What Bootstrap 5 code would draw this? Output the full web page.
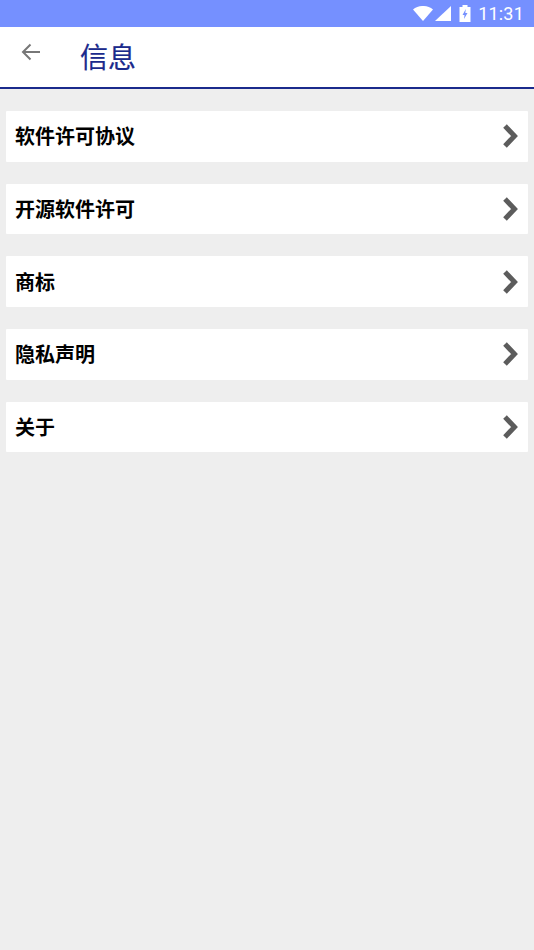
<!DOCTYPE html>
<html lang="zh">
<head>
<meta charset="utf-8">
<title>信息</title>
<link rel="stylesheet" href="https://cdn.jsdelivr.net/npm/bootstrap@5.3.0/dist/css/bootstrap.min.css">
<style>
html, body { height: 100%; }
body { background: #eeeeee; font-family: "Liberation Sans", "Noto Sans CJK SC", sans-serif; overflow: hidden; }
.status-strip { height: 27px; background: #7590ff; color: #fff; padding-right: 10px; gap: 0; }
.status-signal { margin-left: 2px; }
.status-clock { font-family: Roboto, "Liberation Sans", sans-serif; font-size: 18px; line-height: 27px; margin-left: 7px; letter-spacing: .2px; }
.head-strip { height: 62px; background: #fff; border-bottom: 2px solid #1a2a8c; }
.back-btn { width: 63px; padding-left: 21px; padding-bottom: 10px; }
.head-title { color: #1a2a8c; font-size: 28px; line-height: 1; font-family: "Noto Sans CJK SC", sans-serif; margin-left: 17px; margin-bottom: 2px; -webkit-text-stroke: .2px #1a2a8c; }
.menu-area { padding: 22px 6px 0; gap: 22px; }
.menu-row { height: 50.7px; background: #fff; padding: 0 8px 0 9px; border-radius: 1px; color: #000; text-decoration: none; }
.menu-label { font-size: 20px; font-weight: 700; font-family: "Noto Sans CJK SC", sans-serif; line-height: 1; }
</style>
</head>
<body>
<div class="status-strip d-flex align-items-center justify-content-end">
  <svg width="20" height="15" viewBox="0 0 20 15"><path d="M0 3.500C5.500-1.200 14.500-1.200 20 3.500L10 15Z" fill="#fff"/></svg>
  <svg class="status-signal" width="16" height="15" viewBox="0 0 16 15"><path d="M16 0V15H0Z" fill="#fff"/></svg>
  <svg class="ms-2" width="12" height="17" viewBox="0 0 12 17"><path d="M3.500 0H8.500V2H11.500V17H.5V2H3.500Z" fill="#fff"/><path d="M6.800 4L3.500 10H5.500L5 14L8.500 8H6.300Z" fill="#7590ff"/></svg>
  <span class="status-clock">11:31</span>
</div>
<div class="head-strip d-flex align-items-center">
  <div class="back-btn">
    <svg class="d-block" width="20" height="18" viewBox="0 0 20 18"><path d="M19 9H2M9.500 1.500L2 9L9.500 16.500" fill="none" stroke="#777" stroke-width="2"/></svg>
  </div>
  <div class="head-title">信息</div>
</div>
<div class="menu-area d-flex flex-column">
  <a class="menu-row d-flex align-items-center justify-content-between" href="#"><span class="menu-label">软件许可协议</span><svg width="20" height="26" viewBox="0 0 20 26"><path d="M5 3L14.500 13L5 23" fill="none" stroke="#5c5c5c" stroke-width="5"/></svg></a>
  <a class="menu-row d-flex align-items-center justify-content-between" href="#"><span class="menu-label">开源软件许可</span><svg width="20" height="26" viewBox="0 0 20 26"><path d="M5 3L14.500 13L5 23" fill="none" stroke="#5c5c5c" stroke-width="5"/></svg></a>
  <a class="menu-row d-flex align-items-center justify-content-between" href="#"><span class="menu-label">商标</span><svg width="20" height="26" viewBox="0 0 20 26"><path d="M5 3L14.500 13L5 23" fill="none" stroke="#5c5c5c" stroke-width="5"/></svg></a>
  <a class="menu-row d-flex align-items-center justify-content-between" href="#"><span class="menu-label">隐私声明</span><svg width="20" height="26" viewBox="0 0 20 26"><path d="M5 3L14.500 13L5 23" fill="none" stroke="#5c5c5c" stroke-width="5"/></svg></a>
  <a class="menu-row d-flex align-items-center justify-content-between" href="#"><span class="menu-label">关于</span><svg width="20" height="26" viewBox="0 0 20 26"><path d="M5 3L14.500 13L5 23" fill="none" stroke="#5c5c5c" stroke-width="5"/></svg></a>
</div>
<script src="https://cdn.jsdelivr.net/npm/bootstrap@5.3.0/dist/js/bootstrap.bundle.min.js"></script>
</body>
</html>
